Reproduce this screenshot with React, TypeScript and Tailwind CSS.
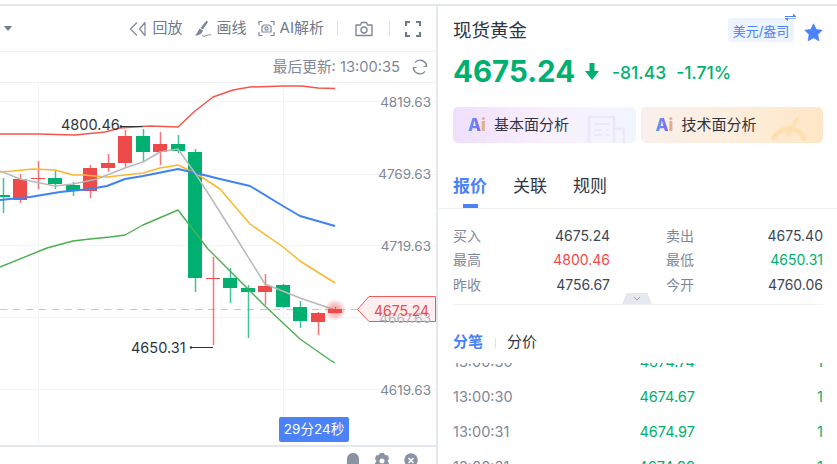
import React from 'react';

const RED = '#ef4a4a';
const GREEN = '#00b070';

// x, body top, body bottom, wick top, wick bottom, up?
const candles: [number, number, number, number, number, boolean][] = [
  [3, 196, 198, 179, 214, false],
  [20, 180, 201, 175, 204, true],
  [38, 179, 180, 162, 190, true],
  [55, 179, 185, 172, 190, false],
  [73, 186, 192, 183, 197, false],
  [90, 169, 192, 166, 199, true],
  [108, 164, 169, 155, 173, true],
  [125, 137, 164, 131, 168, true],
  [143, 137, 153, 130, 162, false],
  [160, 145, 153, 133, 166, true],
  [178, 145, 152, 136, 154, false],
  [195, 153, 279, 150, 293, false],
  [213, 279, 280, 258, 346, true],
  [230, 279, 289, 269, 304, false],
  [248, 289, 293, 286, 339, false],
  [265, 287, 293, 275, 306, true],
  [283, 286, 308, 285, 309, false],
  [300, 308, 322, 302, 329, false],
  [318, 314, 323, 313, 336, true],
];

const lines = [
  { color: '#f2574f', width: 1.5, pts: '0,135 38,135 75,136 105,133 120,129 150,127 178,128 195,112 213,98 233,91 250,88 283,87 302,87 318,89 335,89.5' },
  { color: '#fbb82e', width: 1.5, pts: '0,173 13,172 33,170 55,171 73,176 83,176 107,178 143,174 160,169 178,166 197,175 220,190 250,225 283,248 300,262 335,284' },
  { color: '#3f83f0', width: 2, pts: '0,201 30,198 60,193 90,190 107,187 125,180 143,177 178,170 200,175 220,180 250,187 283,207 300,217 335,227' },
  { color: '#b9b9b9', width: 1.5, pts: '0,172 20,180 55,187 73,185 97,180 125,169 143,163 160,153 178,150 197,177 220,213 265,285 300,299 335,311' },
  { color: '#4caf50', width: 1.4, pts: '0,268 47,249 73,242 90,240 110,238 125,236 143,226 178,211 208,250 265,307 300,340 330,361 335,364' },
];

const yLabels = [
  { text: '4819.63', top: 'top-[11px]' },
  { text: '4769.63', top: 'top-[83px]' },
  { text: '4719.63', top: 'top-[155px]' },
  { text: '4619.63', top: 'top-[299px]' },
];

const quotes = [
  ['买入', '4675.24', 'text-[#3d4656]', '卖出', '4675.40', 'text-[#3d4656]'],
  ['最高', '4800.46', 'text-[#ef4a4a]', '最低', '4650.31', 'text-[#00b070]'],
  ['昨收', '4756.67', 'text-[#3d4656]', '今开', '4760.06', 'text-[#3d4656]'],
];

const trades = [
  ['13:00:30', '4674.74', '1'],
  ['13:00:30', '4674.67', '1'],
  ['13:00:31', '4674.97', '1'],
  ['13:00:31', '4674.98', '1'],
];

const Chart = () => (
  <div className="relative flex-1 overflow-hidden">
    <svg className="block w-[436px] h-[361px]" viewBox="0 84 436 361" fill="none">
      <defs>
        <radialGradient id="halo">
          <stop offset="0.35" stopColor="#ef4a4a" stopOpacity="0.45" />
          <stop offset="1" stopColor="#ef4a4a" stopOpacity="0" />
        </radialGradient>
      </defs>
      <path d="M0 102.5H436M0 175.5H436M0 246.5H436M0 318.5H436M0 390.5H436" stroke="#f3f4f7" />
      <path d="M38.5 84V445M283.5 84V445" stroke="#f3f4f7" />
      <path d="M0 310.5H357" stroke="#fbb4b4" strokeWidth="1.2" strokeDasharray="7 6" />
      {candles.map(([x, top, bottom, wt, wb, up]) => {
        const c = up ? RED : GREEN;
        return (
          <g key={x} fill={c}>
            <rect x={x - 0.25} y={wt} width="1.5" height={wb - wt} opacity="0.75" />
            <rect x={x - 7} y={top} width="14" height={bottom - top} />
          </g>
        );
      })}
      {lines.map(l => (
        <polyline key={l.color} points={l.pts} stroke={l.color} strokeWidth={l.width} strokeLinejoin="round" />
      ))}
      <circle cx="335" cy="311" r="11" fill="url(#halo)" />
      <rect x="328" y="310" width="14" height="4" fill={RED} />
      <rect x="335" y="308" width="1" height="3" fill={RED} />
      <path d="M120 127.5H143M190 348.5H213" stroke="#333" />
      <circle cx="121" cy="127.5" r="1.2" fill="#333" />
      <circle cx="191" cy="348.5" r="1.2" fill="#333" />
      <path d="M357.5 310.5L369 297.5H435.5V322.5H369Z" fill="#fdeff0" stroke="#ef5a5a" />
    </svg>

    {yLabels.map(l => (
      <span key={l.text} className={`absolute right-[5px] ${l.top} text-[13.5px] leading-[16px] text-[#7f8899]`}>{l.text}</span>
    ))}
    <span className="absolute right-[5px] top-[227px] text-[13.5px] leading-[16px] text-[#b0b5bf]">4667.63</span>
    <span className="absolute left-[374px] top-[219px] text-[14px] leading-[18px] text-[#ef4a4a]">4675.24</span>
    <span className="absolute left-[61px] top-[33px] text-[14.5px] leading-[18px] text-[#2f3542]">4800.46</span>
    <span className="absolute left-[131px] top-[256px] text-[14.5px] leading-[18px] text-[#2f3542]">4650.31</span>
    <span className="absolute left-[279px] top-[334px] w-[70px] h-[25px] rounded-[2px] bg-[#4c82f7] text-white text-[13.5px] leading-[25px] text-center">29分24秒</span>
  </div>
);

const ChartPanel = () => (
  <div className="w-[438px] h-full flex flex-col border-r-2 border-[#e3e7ef]">
    <div className="h-[46px] shrink-0 flex items-center border-b border-[#f1f2f5] text-[#6f7a8d] text-[15px]">
      <svg className="ml-[4px] mr-auto" width="9" height="6" viewBox="0 0 9 6"><path d="M0 0H8L4 5Z" fill="#6f7a8d" /></svg>
      <svg className="mr-[7px]" width="17" height="16" viewBox="0 0 17 16" fill="none" stroke="#7f8899" strokeWidth="1.2">
        <path d="M8 1.5L1.5 8L8 14.5M16 1.5L10.5 8L16 14.5V1.5Z" strokeLinejoin="round" />
      </svg>
      <span className="mr-[11px]">回放</span>
      <svg className="mr-[5px]" width="18" height="18" viewBox="0 0 18 18">
        <path d="M12.5 0.5L14 2L9 9.5L6.5 8Z" fill="#7f8899" />
        <path d="M5.5 8.5L9 10.5C8.5 13.5 5 15.5 1 15.5C3 13.5 4 11 5.5 8.5Z" fill="#7f8899" />
        <path d="M8 15.5C11 17.5 13 14 17 15" stroke="#7f8899" fill="none" />
      </svg>
      <span className="mr-[11px]">画线</span>
      <svg className="mr-[5px]" width="17" height="17" viewBox="0 0 17 17" fill="none" stroke="#7f8899" strokeWidth="1.2">
        <path d="M1 5V1.5H4.5M12.5 1.5H16V5M16 12V15.5H12.5M4.5 15.5H1V12" />
        <path d="M4 6.5L6 5H11L13 6.5V12H4Z" />
        <circle cx="8.5" cy="8.5" r="1.6" />
      </svg>
      <span className="mr-[13px]">AI解析</span>
      <div className="w-px h-[15px] bg-[#dfe2e8] mr-[17px]" />
      <svg className="mr-[16px]" width="18" height="16" viewBox="0 0 18 16" fill="none" stroke="#7f8899" strokeWidth="1.4">
        <path d="M1 4H5.5L6.5 1.5H11.5L12.5 4H17V14.5H1Z" strokeLinejoin="round" />
        <circle cx="9" cy="9" r="3" />
      </svg>
      <div className="w-px h-[15px] bg-[#dfe2e8] mr-[15px]" />
      <svg className="mr-[15px]" width="16" height="16" viewBox="0 0 16 16" fill="none" stroke="#6f7a8d" strokeWidth="2.2">
        <path d="M1 5V1H5M11 1H15V5M15 11V15H11M5 15H1V11" />
      </svg>
    </div>
    <div className="h-[31px] shrink-0 flex items-center justify-end border-b border-[#f1f2f5] text-[#7f8899] text-[14.7px]">
      <span className="mr-[12px]">最后更新: 13:00:35</span>
      <svg className="mr-[8px]" width="16" height="16" viewBox="0 0 16 16" fill="none" stroke="#7f8899" strokeWidth="1.4">
        <path d="M14.5 7A6.5 6.5 0 0 0 3 3.6M1.5 9A6.5 6.5 0 0 0 13 12.4" />
        <path d="M14.5 4.5V7.5H11.5M1.5 11.5V8.5H4.5" strokeWidth="1.2" />
      </svg>
    </div>
    <Chart />
    <div className="h-[19px] shrink-0 overflow-hidden border-t-2 border-[#e3e7ef] flex justify-end gap-[15px] pr-[18px] pt-[6px]">
      <svg className="shrink-0" width="14" height="16" viewBox="0 0 14 16" fill="#8a93a4"><path d="M7 0C10.5 0 13 2.5 13 6V16H1V6C1 2.5 3.5 0 7 0Z" /></svg>
      <svg className="shrink-0" width="14" height="16" viewBox="0 0 14 16" fill="#8a93a4"><path fillRule="evenodd" d="M5 0H9L10 2L13 2.5L14 6L12.5 8L14 10L13 13L10 14L9 16H5L4 14L1 13L0 10L1.5 8L0 6L1 2.5L4 2ZM7 5.5A2.5 2.5 0 1 0 7 10.5A2.5 2.5 0 1 0 7 5.5Z" /></svg>
      <svg className="shrink-0" width="14" height="16" viewBox="0 0 14 16"><circle cx="7" cy="7" r="6.8" fill="#8a93a4" /><path d="M4.5 5L9.5 10M9.5 5L4.5 10" stroke="#fff" strokeWidth="1.5" /></svg>
    </div>
  </div>
);

const AiLogo = () => (
  <span className="mr-[8px] text-[17px] leading-none font-extrabold">
    <span className="bg-gradient-to-r from-[#5c9af5] to-[#8060f5] bg-clip-text text-transparent">A</span>
    <span className="text-[#e0b080]">i</span>
  </span>
);

const InfoPanel = () => (
  <div className="flex-1 h-full flex flex-col pl-[15px] pr-[14px]">
    <div className="h-[35px] shrink-0 flex items-end">
      <span className="text-[18.5px] leading-[28px] text-[#2f3542] mb-[-3px]">现货黄金</span>
      <div className="relative ml-auto mb-[-1px] w-[66px] h-[24px] rounded-[3px] bg-[#edf3ff] text-[#4c82f7] text-[13px] leading-[26px] text-center whitespace-nowrap">
        美元/盎司
        <svg className="absolute right-[-2px] top-[-5px]" width="11" height="9" viewBox="0 0 11 9" fill="#4c82f7">
          <path d="M0 3H8V0.5L11 3.2V4H0ZM11 5.5H3V8L0 5.8V5H11Z" />
        </svg>
      </div>
      <svg className="ml-[10px] mb-[-1px]" width="19" height="19" viewBox="0 0 24 24" fill="#4c82f7">
        <path d="M12 1L15.4 8.2L23 9.2L17.4 14.6L18.8 22.4L12 18.6L5.2 22.4L6.6 14.6L1 9.2L8.6 8.2Z" stroke="#4c82f7" strokeLinejoin="round" />
      </svg>
    </div>
    <div className="h-[50px] mt-[8px] shrink-0 flex items-center text-[#00b070]">
      <span className="w-[121px] text-[29.5px] leading-none font-bold mb-[4px] whitespace-nowrap">4675.24</span>
      <svg className="ml-[11px] mb-[5px]" width="14" height="17" viewBox="0 0 14 17" fill="#00b070"><path d="M4.5 0H9.5V8H14L7 17L0 8H4.5Z" /></svg>
      <span className="ml-[13px] mb-[1px] text-[17.5px] font-medium">-81.43</span>
      <span className="ml-[10px] mb-[1px] text-[17.5px] font-medium">-1.71%</span>
    </div>
    <div className="h-[36px] mt-[8px] shrink-0 flex gap-[5px]">
      <div className="relative flex-1 overflow-hidden rounded-[5px] bg-gradient-to-r from-[#efdffc] via-[#f9effd] to-[#f0f6ff] flex items-center pl-[15px] text-[15px] text-[#2f3542]">
        <AiLogo />
        基本面分析
        <svg className="absolute left-[134px] top-[8px]" width="38" height="28" viewBox="0 0 38 28" fill="none" stroke="#efe6fb" strokeWidth="2.5">
          <path d="M2 28V2H27V28M27 14H37V28" />
          <path d="M7 9H22M7 15H15M19 15H22M7 20H15M19 20H22" strokeWidth="2" />
        </svg>
      </div>
      <div className="relative flex-1 overflow-hidden rounded-[5px] bg-gradient-to-r from-[#f9f0ec] via-[#fdeedd] to-[#ffe6c6] flex items-center pl-[15px] text-[15px] text-[#2f3542]">
        <AiLogo />
        技术面分析
        <svg className="absolute left-[128px] top-[7px]" width="40" height="28" viewBox="0 0 40 28" fill="none" stroke="#fedfb0" strokeWidth="5">
          <path d="M4 26A17 17 0 0 1 36 26" />
          <path d="M18 22L29 4" strokeWidth="4" />
        </svg>
      </div>
    </div>
    <div className="h-[66px] shrink-0 relative flex items-start gap-[26px] pt-[30px] text-[17px] leading-[26px] text-[#2f3542] border-b border-[#f1f2f5] mx-[-15px] mr-[-14px] px-[15px]">
      <span className="font-bold text-[#4c82f7]">报价</span>
      <span>关联</span>
      <span>规则</span>
      <div className="absolute left-[25px] bottom-0 w-[15px] h-[4px] bg-[#4c82f7]" />
    </div>
    <div className="relative h-[96px] shrink-0 pt-[14px] border-b border-[#f1f2f5]">
      {quotes.map(([l1, v1, c1, l2, v2, c2]) => (
        <div key={l1} className="h-[24.5px] flex items-center text-[14px]">
          <span className="w-[60px] text-[#7f8899]">{l1}</span>
          <span className={`w-[97px] text-right ${c1}`}>{v1}</span>
          <span className="ml-[56px] w-[60px] text-[#7f8899]">{l2}</span>
          <span className={`flex-1 text-right ${c2}`}>{v2}</span>
        </div>
      ))}
      <div className="absolute left-[169px] bottom-0 w-[30px] h-[11px] bg-[#e6e8f0] [clip-path:polygon(15%_0,85%_0,100%_100%,0_100%)] flex items-center justify-center">
        <svg width="8" height="5" viewBox="0 0 8 5" fill="none" stroke="#9aa2b1"><path d="M1 1L4 4L7 1" /></svg>
      </div>
    </div>
    <div className="h-[58px] shrink-0 flex items-center pt-[17px] text-[15px]">
      <span className="font-bold text-[#4c82f7]">分笔</span>
      <div className="w-px h-[10px] bg-[#dfe2e8] ml-[12px] mr-[11px]" />
      <span className="text-[#2f3542]">分价</span>
    </div>
    <div className="flex-1 overflow-hidden">
      <div className="mt-[-19px]">
        {trades.map(([t, p, q], i) => (
          <div key={i} className="h-[35px] shrink-0 flex items-center text-[14.5px]">
            <span className="w-[100px] text-[#7f8899]">{t}</span>
            <span className="w-[142px] text-right text-[#00b070]">{p}</span>
            <span className="flex-1 text-right text-[#00b070]">{q}</span>
          </div>
        ))}
      </div>
    </div>
  </div>
);

export default function App() {
  return (
    <div className="w-[837px] h-[464px] overflow-hidden flex flex-col bg-white [font-family:Inter,'Noto_Sans_CJK_SC',sans-serif]">
      <div className="h-[6px] shrink-0 bg-white border-b-2 border-[#e3e7ef]" />
      <div className="flex-1 min-h-0 flex">
        <ChartPanel />
        <InfoPanel />
      </div>
    </div>
  );
}
